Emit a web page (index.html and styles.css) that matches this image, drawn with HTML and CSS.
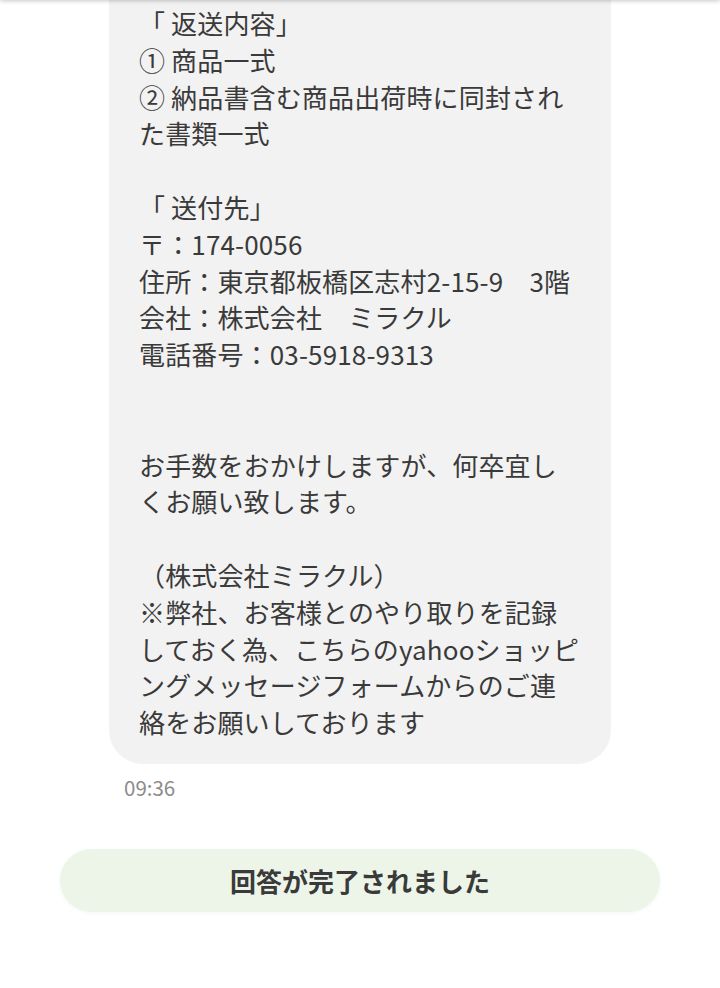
FILE: index.html
```html
<!DOCTYPE html>
<html lang="ja">
<head>
<meta charset="utf-8">
<title>メッセージ</title>
<link rel="stylesheet" href="styles.css">
</head>
<body>
<div class="topbar-shadow"></div>
<main class="chat">
  <div class="msg">
    <div class="bubble"><p class="text">「 返送内容」
① 商品一式
② 納品書含む商品出荷時に同封され
た書類一式

「 送付先」
〒：174-0056
住所：東京都板橋区志村2-15-9　3階
会社：株式会社　ミラクル
電話番号：03-5918-9313


お手数をおかけしますが、何卒宜し
くお願い致します。

（株式会社ミラクル）
※弊社、お客様とのやり取りを記録
しておく為、こちらのyahooショッピ
ングメッセージフォームからのご連
絡をお願いしております</p></div>
    <div class="time">09:36</div>
  </div>
  <div class="done">回答が完了されました</div>
</main>
</body>
</html>
```

FILE: styles.css
```css
html, body {
  margin: 0;
  padding: 0;
  background: #ffffff;
}

body {
  font-family: "Noto Sans CJK JP", "Noto Sans", sans-serif;
  color: #333333;
  width: 720px;
  height: 988px;
  overflow: hidden;
}

.topbar-shadow {
  position: fixed;
  top: -10px;
  left: 0;
  right: 0;
  height: 10px;
  background: #ffffff;
  box-shadow: 0 1px 4px rgba(0, 0, 0, 0.22);
  z-index: 5;
}

.chat {
  display: flex;
  flex-direction: column;
}

.msg {
  display: flex;
  flex-direction: column;
  padding-left: 109px;
}

.bubble {
  width: 502px;
  box-sizing: border-box;
  background: #f2f2f2;
  border-radius: 0 0 34px 34px;
  padding: 5px 30px 23px 30px;
}

.text {
  margin: 0;
  font-size: 26px;
  line-height: 36.8px;
  letter-spacing: 0.15px;
  white-space: pre;
  color: #3a3a3a;
}

.time {
  margin-top: 11px;
  padding-left: 15px;
  font-size: 20.5px;
  line-height: 24px;
  color: #8c8c8c;
}

.done {
  margin: 50px 60px 0 60px;
  height: 63px;
  border-radius: 32px;
  background: #edf5e9;
  box-shadow: 0 1px 4px rgba(0, 0, 0, 0.04);
  display: flex;
  align-items: center;
  justify-content: center;
  font-size: 26px;
  font-weight: 700;
  color: #3a3a3a;
}
```
